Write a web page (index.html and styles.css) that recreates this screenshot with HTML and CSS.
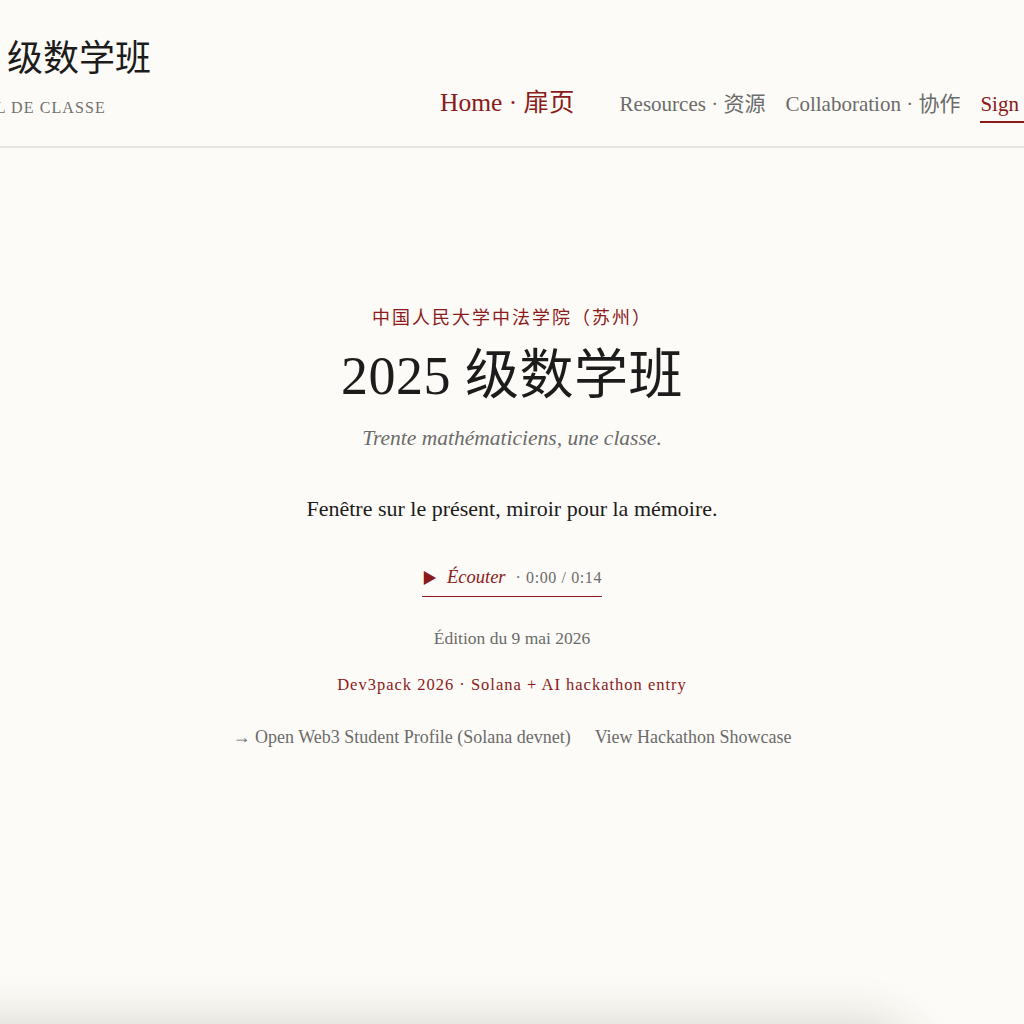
FILE: index.html
```html
<!DOCTYPE html>
<html lang="fr">
<head>
<meta charset="UTF-8" />
<meta name="viewport" content="width=device-width, initial-scale=1" />
<title>2025 级数学班 · Journal de classe</title>
<link rel="stylesheet" href="styles.css">
</head>
<body>
<header class="site-header">
  <div class="header-inner">
    <a class="brand" href="#">
      <span class="brand-title">2025 级数学班</span>
      <span class="brand-sub">Journal de classe</span>
    </a>
    <nav class="main-nav">
      <a class="nav-link nav-home" href="#">Home · 扉页</a>
      <a class="nav-link" href="#">Resources · 资源</a>
      <a class="nav-link" href="#">Collaboration · 协作</a>
      <a class="nav-link nav-sign" href="#">Sign in · 登录</a>
    </nav>
  </div>
</header>

<main class="hero">
  <p class="school">中国人民大学中法学院（苏州）</p>
  <h1 class="hero-title">2025 级数学班</h1>
  <p class="tagline">Trente mathématiciens, une classe.</p>
  <p class="motto">Fenêtre sur le présent, miroir pour la mémoire.</p>

  <button class="listen" type="button">
    <span class="listen-icon">&#9654;</span>
    <span class="listen-label">Écouter</span>
    <span class="listen-time">· 0:00 / 0:14</span>
  </button>

  <p class="edition">Édition du 9 mai 2026</p>
  <p class="hackathon">Dev3pack 2026 · Solana + AI hackathon entry</p>

  <div class="hero-links">
    <a href="#">→ Open Web3 Student Profile (Solana devnet)</a>
    <a href="#">View Hackathon Showcase</a>
  </div>
</main>

<div class="player-dock"></div>
</body>
</html>
```

FILE: styles.css
```css
body { margin:0; background:#fcfbf7; color:#1c1c1c; font-family:"Liberation Serif", "Noto Sans CJK SC", serif; overflow-x:hidden; }
a { color:inherit; text-decoration:none; }

/* header: the row is wider than the window and stays centred */
.site-header { display:flex; justify-content:center; border-bottom:2px solid #e6e4df; height:146px; }
.header-inner { flex:none; width:1172px; display:flex; justify-content:space-between; align-items:flex-start; }
.brand { display:flex; flex-direction:column; padding-top:38px; }
.brand-title { font-size:36px; line-height:42px; color:#1c1c1c; }
.brand-sub { margin-top:19px; font-size:16px; letter-spacing:1.1px; text-transform:uppercase; color:#707070; }

.main-nav { display:flex; align-items:baseline; padding-top:81px; margin-right:-2px; }
.nav-link { font-size:21px; color:#6b6b6b; margin-left:20px; padding-bottom:4px; }
.nav-home { font-size:25.5px; color:#8b1a1a; margin-right:25px; }
.nav-sign { color:#8b1a1a; border-bottom:2px solid #8b1a1a; }

/* hero */
.hero { display:flex; flex-direction:column; align-items:center; text-align:center; padding-top:155px; }
.hero p { margin:0; }
.school { font-size:18px; letter-spacing:2px; color:#8b1a1a; }
.hero-title { margin:14px 0 0; font-size:54px; font-weight:normal; line-height:66px; letter-spacing:0.5px; }
.tagline { margin-top:17px !important; font-size:21.5px; font-style:italic; color:#6b6b6b; }
.motto { margin-top:45px !important; font-size:22px; color:#1c1c1c; }

.listen { margin-top:44px; display:flex; align-items:baseline; gap:10px; background:none; border:none; border-bottom:1.5px solid #8b1a1a; padding:0 0 8px; font-family:inherit; cursor:pointer; }
.listen-icon { font-size:15px; color:#8b1a1a; }
.listen-label { font-size:18.5px; font-style:italic; color:#8b1a1a; }
.listen-time { font-size:16px; color:#6b6b6b; letter-spacing:0.6px; }

.edition { margin-top:31px !important; font-size:17.5px; color:#6b6b6b; }
.hackathon { margin-top:26px !important; font-size:16.5px; letter-spacing:1px; color:#8b1a1a; }

.hero-links { margin-top:32px; display:flex; gap:24px; font-size:18px; color:#6b6b6b; }

/* bottom audio dock sitting just under the window, only its shadow shows */
.player-dock { position:fixed; left:-40px; top:100%; width:960px; height:80px; background:#fcfbf7; box-shadow:0 0 45px 6px rgba(60,50,30,0.16); border-radius:0 60px 0 0; }
```
